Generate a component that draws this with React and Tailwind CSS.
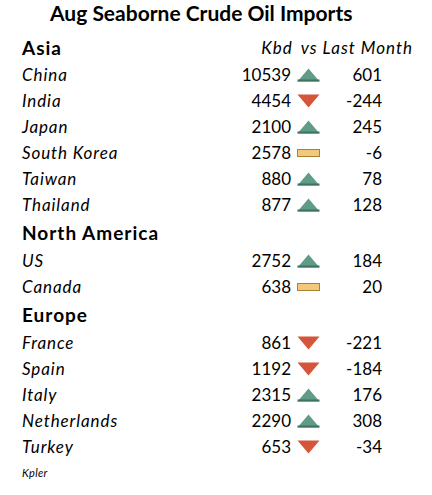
import React from 'react';

const sections = [
    {
        name: 'Asia',
        rows: [
            ['China', 10539, 'up', 601],
            ['India', 4454, 'down', -244],
            ['Japan', 2100, 'up', 245],
            ['South Korea', 2578, 'flat', -6],
            ['Taiwan', 880, 'up', 78],
            ['Thailand', 877, 'up', 128],
        ],
    },
    {
        name: 'North America',
        rows: [
            ['US', 2752, 'up', 184],
            ['Canada', 638, 'flat', 20],
        ],
    },
    {
        name: 'Europe',
        rows: [
            ['France', 861, 'down', -221],
            ['Spain', 1192, 'down', -184],
            ['Italy', 2315, 'up', 176],
            ['Netherlands', 2290, 'up', 308],
            ['Turkey', 653, 'down', -34],
        ],
    },
];

const Trend = ({ dir }) => {
    if (dir === 'up') {
        return (
            <svg width="23" height="14" viewBox="0 0 23 14">
                <polygon points="11.5,0.5 22.5,13.5 0.5,13.5" fill="#5e9c86" />
                <rect x="0.5" y="11.5" width="22" height="2" fill="#3f7360" />
            </svg>
        );
    }
    if (dir === 'down') {
        return (
            <svg width="23" height="14" viewBox="0 0 23 14">
                <polygon points="0.5,0.5 22.5,0.5 11.5,13.5" fill="#d4553a" />
            </svg>
        );
    }
    return (
        <svg width="23" height="8" viewBox="0 0 23 8">
            <rect x="0.5" y="0.5" width="22" height="7" fill="#f2c87d" stroke="#a8832f" strokeWidth="1" />
        </svg>
    );
};

export default function App() {
    return (
        <div className="w-[432px] h-[495px] bg-white text-black font-['Lato','Open_Sans',sans-serif] pl-[22px]">
            <div className="h-[26px] flex items-center pl-[28px] text-[21px] font-bold">
                Aug Seaborne Crude Oil Imports
            </div>
            {sections.map((section, si) => (
                <div key={section.name}>
                    <div className={`${si === 0 ? 'h-[28px] mt-[8px]' : 'h-[30px]'} flex items-center`}>
                        <div className="flex-1 text-[19px] font-bold tracking-[1px]">{section.name}</div>
                        {si === 0 && (
                            <div className="flex items-center italic text-[17px] tracking-[1px] pr-[19px]">
                                <span>Kbd</span>
                                <span className="ml-[8px]">vs Last Month</span>
                            </div>
                        )}
                    </div>
                    {section.rows.map(([country, kbd, dir, diff]) => (
                        <div key={country} className="h-[26px] flex items-center text-[17px]">
                            <div className="flex-1 italic tracking-[0.9px]">{country}</div>
                            <div className="w-[80px] text-right">{kbd}</div>
                            <div className="w-[23px] ml-[6px] flex items-center justify-center">
                                <Trend dir={dir} />
                            </div>
                            <div className="w-[62px] text-right">{diff}</div>
                            <div className="w-[50px]" />
                        </div>
                    ))}
                </div>
            ))}
            <div className="h-[26px] flex items-center italic text-[11px] tracking-[0.3px]">Kpler</div>
        </div>
    );
}
